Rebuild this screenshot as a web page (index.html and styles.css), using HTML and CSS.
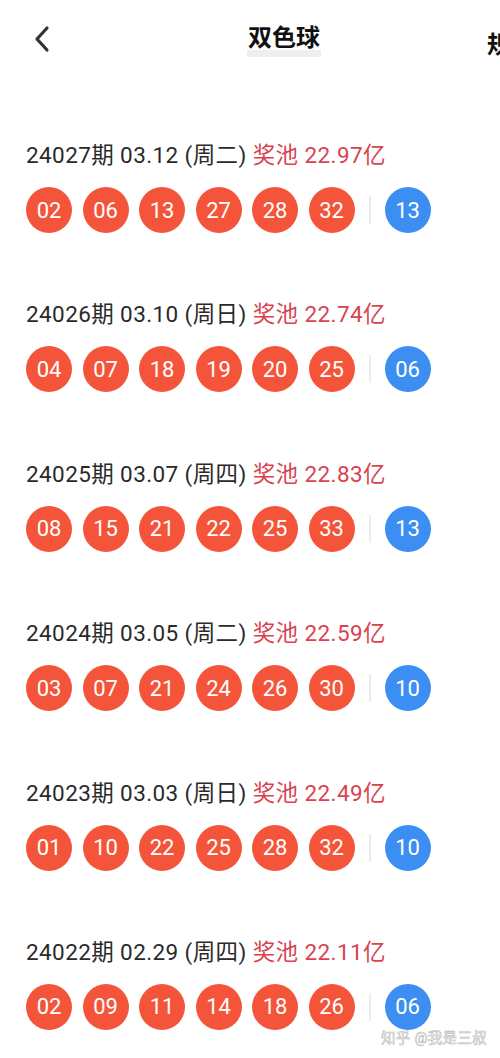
FILE: index.html
```html
<!DOCTYPE html>
<html lang="zh-CN">
<head>
<meta charset="UTF-8" />
<meta name="viewport" content="width=device-width, initial-scale=1" />
<title>双色球</title>
<link rel="stylesheet" href="styles.css">
</head>
<body>
<div class="page">
  <header class="topbar">
    <svg class="back" width="20" height="28" viewBox="0 0 20 28"><path d="M15 3 L5 14 L15 25" fill="none" stroke="#333" stroke-width="3.2" stroke-linecap="round" stroke-linejoin="round"/></svg>
    <h1 class="title">双色球</h1>
    <span class="rule">规</span>
  </header>

  <div class="draws">
    <div class="draw">
      <p class="info">24027期 03.12 (周二) <span class="pool">奖池 22.97亿</span></p>
      <div class="balls">
        <span class="ball">02</span><span class="ball">06</span><span class="ball">13</span><span class="ball">27</span><span class="ball">28</span><span class="ball">32</span>
        <span class="sep"></span><span class="ball blue">13</span>
      </div>
    </div>
    <div class="draw">
      <p class="info">24026期 03.10 (周日) <span class="pool">奖池 22.74亿</span></p>
      <div class="balls">
        <span class="ball">04</span><span class="ball">07</span><span class="ball">18</span><span class="ball">19</span><span class="ball">20</span><span class="ball">25</span>
        <span class="sep"></span><span class="ball blue">06</span>
      </div>
    </div>
    <div class="draw">
      <p class="info">24025期 03.07 (周四) <span class="pool">奖池 22.83亿</span></p>
      <div class="balls">
        <span class="ball">08</span><span class="ball">15</span><span class="ball">21</span><span class="ball">22</span><span class="ball">25</span><span class="ball">33</span>
        <span class="sep"></span><span class="ball blue">13</span>
      </div>
    </div>
    <div class="draw">
      <p class="info">24024期 03.05 (周二) <span class="pool">奖池 22.59亿</span></p>
      <div class="balls">
        <span class="ball">03</span><span class="ball">07</span><span class="ball">21</span><span class="ball">24</span><span class="ball">26</span><span class="ball">30</span>
        <span class="sep"></span><span class="ball blue">10</span>
      </div>
    </div>
    <div class="draw">
      <p class="info">24023期 03.03 (周日) <span class="pool">奖池 22.49亿</span></p>
      <div class="balls">
        <span class="ball">01</span><span class="ball">10</span><span class="ball">22</span><span class="ball">25</span><span class="ball">28</span><span class="ball">32</span>
        <span class="sep"></span><span class="ball blue">10</span>
      </div>
    </div>
    <div class="draw">
      <p class="info">24022期 02.29 (周四) <span class="pool">奖池 22.11亿</span></p>
      <div class="balls">
        <span class="ball">02</span><span class="ball">09</span><span class="ball">11</span><span class="ball">14</span><span class="ball">18</span><span class="ball">26</span>
        <span class="sep"></span><span class="ball blue">06</span>
      </div>
    </div>
  </div>

  <span class="watermark">知乎 @我是三叔</span>
</div>
</body>
</html>
```

FILE: styles.css
```css
* {
  box-sizing: border-box;
}
body {
  margin: 0;
  background: #fff;
  font-family: Roboto, "Noto Sans CJK SC", sans-serif;
  color: #222;
  overflow: hidden;
}
.page {
  position: relative;
  width: 500px;
  height: 1058px;
}
.topbar {
  position: relative;
  display: flex;
  align-items: center;
  height: 76px;
  padding: 0 0 2px 247px;
}
.back {
  position: absolute;
  left: 32px;
  top: 25px;
}
.title {
  margin: 0;
  font-size: 24px;
  font-weight: 700;
  color: #111;
  padding: 0 1px 4px;
  background: linear-gradient(to bottom, #fff 0, #fff 82%, #efefef 82%);
}
.rule {
  position: absolute;
  left: 487px;
  top: 25px;
  font-size: 24px;
  font-weight: 700;
  color: #111;
}
.draws {
  padding: 64px 0 0 26px;
}
.draw {
  height: 159.4px;
}
.info {
  margin: 0;
  font-size: 22.5px;
  line-height: 30px;
  color: #2a2a2a;
  letter-spacing: 0.4px;
}
.pool {
  color: #d9434f;
}
.balls {
  display: flex;
  align-items: center;
  gap: 10.5px;
  margin-top: 17px;
}
.ball {
  width: 46px;
  height: 46px;
  border-radius: 50%;
  background: #f4553a;
  color: #fff;
  font-size: 22px;
  display: flex;
  align-items: center;
  justify-content: center;
}
.ball.blue {
  background: #3d8ef2;
}
.sep {
  width: 2px;
  height: 28px;
  background: #ececec;
  margin: 0 3.5px;
}
.watermark {
  position: absolute;
  left: 381px;
  top: 1026px;
  font-size: 14.5px;
  color: #fff;
  -webkit-text-stroke: 0.6px #bbb;
  letter-spacing: 0.3px;
}
```
